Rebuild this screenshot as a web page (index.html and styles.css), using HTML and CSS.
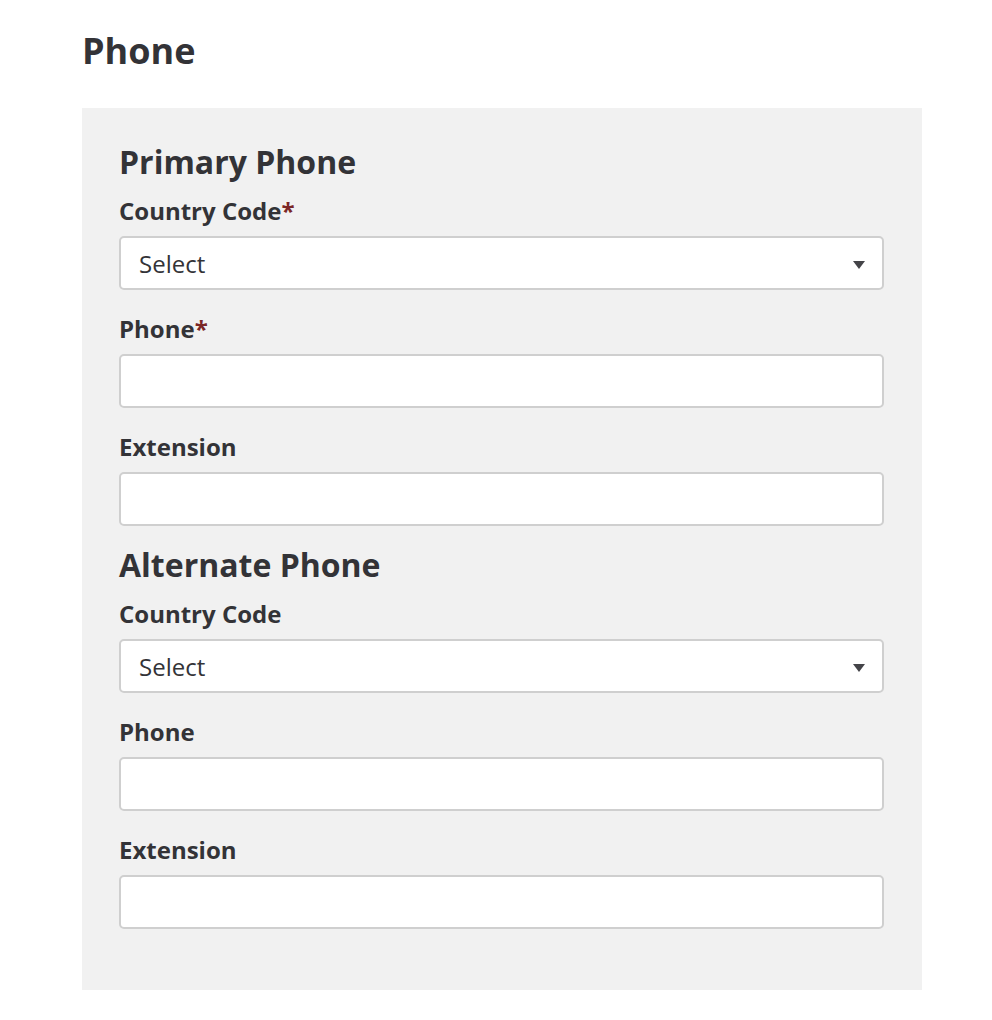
FILE: index.html
```html
<!DOCTYPE html>
<html lang="en">
<head>
<meta charset="utf-8">
<title>Phone</title>
<link rel="stylesheet" href="styles.css">
</head>
<body>
<main class="page">
  <h1 class="page-title">Phone</h1>
  <section class="panel">
    <h2 class="section-title">Primary Phone</h2>
    <div class="field">
      <label class="field-label">Country Code<span class="req">*</span></label>
      <div class="select">
        <span class="select-text">Select</span>
        <span class="select-arrow"></span>
      </div>
    </div>
    <div class="field">
      <label class="field-label">Phone<span class="req">*</span></label>
      <input class="input" type="text">
    </div>
    <div class="field">
      <label class="field-label">Extension</label>
      <input class="input" type="text">
    </div>

    <h2 class="section-title">Alternate Phone</h2>
    <div class="field">
      <label class="field-label">Country Code</label>
      <div class="select">
        <span class="select-text">Select</span>
        <span class="select-arrow"></span>
      </div>
    </div>
    <div class="field">
      <label class="field-label">Phone</label>
      <input class="input" type="text">
    </div>
    <div class="field">
      <label class="field-label">Extension</label>
      <input class="input" type="text">
    </div>
  </section>
</main>
</body>
</html>
```
FILE: styles.css
```css
html, body {
  margin: 0;
  padding: 0;
  background: #fff;
}
body {
  font-family: "Open Sans", "Liberation Sans", sans-serif;
  color: #333337;
}
.page {
  width: 840px;
  margin-left: 82px;
  padding-top: 28px;
}
.page-title {
  margin: 0 0 34px 0;
  font-size: 36px;
  line-height: 46px;
  font-weight: 700;
}
.panel {
  background: #f1f1f1;
  padding: 39px 38px 37px 37px;
}
.section-title {
  margin: 0 0 19px 0;
  font-size: 32px;
  line-height: 30px;
  font-weight: 700;
}
.field {
  display: flex;
  flex-direction: column;
  margin-bottom: 24px;
}
.field-label {
  font-size: 24px;
  line-height: 30px;
  font-weight: 700;
  margin-bottom: 10px;
}
.req {
  color: #7b2626;
}
.input,
.select {
  box-sizing: border-box;
  height: 54px;
  width: 100%;
  background: #fff;
  border: 2px solid #cfcfcf;
  border-radius: 5px;
  margin: 0;
  font-family: inherit;
  font-size: 24px;
}
.select {
  display: flex;
  align-items: center;
  justify-content: space-between;
  padding: 0 17px 0 18px;
}
.select-text {
  font-size: 24px;
  color: #333337;
}
.select-arrow {
  width: 0;
  height: 0;
  margin-top: 4px;
  border-left: 6px solid transparent;
  border-right: 6px solid transparent;
  border-top: 8px solid #444448;
}
```
